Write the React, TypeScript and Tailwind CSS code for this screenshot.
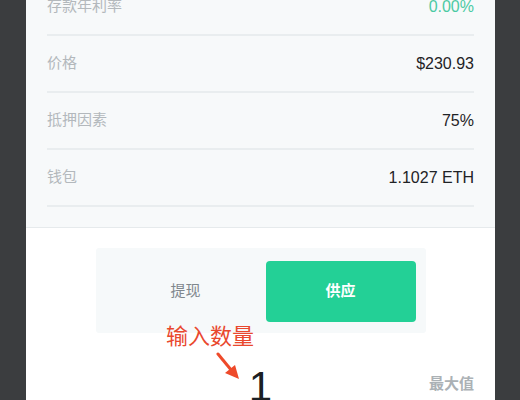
const rows = [
  { label: "存款年利率", value: "0.00%", green: true },
  { label: "价格", value: "$230.93" },
  { label: "抵押因素", value: "75%" },
  { label: "钱包", value: "1.1027 ETH" },
];

const App = () => {
  return (
    <div
      className="w-[520px] h-[400px] overflow-hidden bg-[#3b3d3f] flex justify-center"
      style={{ fontFamily: '"Liberation Sans", "Noto Sans CJK SC", sans-serif' }}
    >
      <div className="w-[469px] h-full bg-white flex flex-col ml-[1px]">
        {/* --- Stats --- */}
        <div className="bg-[#f7f9fa] px-[21px] pb-[20px] border-b border-[#e6eaec]">
          <div className="-mt-[21px]">
            {rows.map((r) => (
              <div
                key={r.label}
                className="h-[57px] flex items-center justify-between border-b-2 border-[#e9edef]"
              >
                <span className="text-[15px] text-[#b3b8bc]">{r.label}</span>
                <span
                  className={
                    r.green
                      ? "text-[16px] text-[#4ccaa3]"
                      : "text-[16px] text-[#1f2326]"
                  }
                >
                  {r.value}
                </span>
              </div>
            ))}
          </div>
        </div>

        {/* --- Toggle --- */}
        <div className="relative flex flex-col items-center pt-[20px]">
          <div className="w-[330px] h-[85px] bg-[#f6f9fa] rounded-[3px] flex items-center pl-[10px] pr-[10px] pt-[2px]">
            <div className="flex-1 h-[61px] flex items-center justify-center text-[15px] text-[#7f878d]">
              提现
            </div>
            <div className="w-[150px] h-[61px] rounded-[4px] bg-[#23d096] flex items-center justify-center text-[15px] font-bold text-white">
              供应
            </div>
          </div>

          {/* --- Amount --- */}
          <div className="w-full flex items-start justify-between px-[21px] mt-[33px]">
            <div className="w-[47px]" />
            <div className="text-[42px] leading-none text-[#1b2024] -ml-[2px]">1</div>
            <div className="text-[15px] font-bold text-[#abb1b5] mt-[7px]">最大值</div>
          </div>

          {/* annotation */}
          <div className="absolute left-[140px] top-[98px] text-[22px] text-[#e9482e] leading-none">
            输入数量
          </div>
          <svg
            className="absolute left-[189px] top-[124px]"
            width="28"
            height="30"
            viewBox="0 0 28 30"
          >
            <line x1="3" y1="2" x2="17" y2="19" stroke="#ee4a2a" strokeWidth="3" strokeLinecap="round" />
            <polygon points="24,27 10,21 20,13" fill="#ee4a2a" />
          </svg>
        </div>
      </div>
    </div>
  );
};

export default App;
